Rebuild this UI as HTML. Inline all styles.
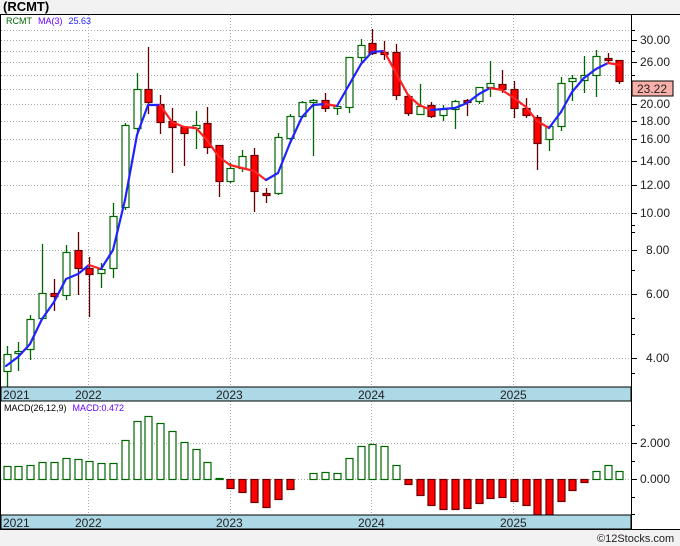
<!DOCTYPE html>
<html><head><meta charset="utf-8">
<style>
body{margin:0;width:680px;height:546px;overflow:hidden;background:#f2f2f2;font-family:"Liberation Sans",sans-serif}
svg{display:block}
</style></head><body>
<svg id="s" width="680" height="546" xmlns="http://www.w3.org/2000/svg" font-family="Liberation Sans, DejaVu Sans, sans-serif">
<rect x="0" y="0" width="680" height="546" fill="#f2f2f2"/>
<text x="3" y="11" font-size="13" font-weight="bold" fill="#000">(RCMT)</text>
<rect x="1" y="14" width="630" height="373" fill="#fff"/>
<rect x="631" y="14" width="49" height="387" fill="#fff"/>
<rect x="1" y="401" width="630" height="114" fill="#fff"/>
<rect x="631" y="401" width="49" height="129" fill="#fff"/>
<g id="grid" stroke="#aaa" stroke-dasharray="1,2" stroke-width="1"></g>
<g id="c"></g>
<rect x="1" y="387" width="630" height="14" fill="#add8e6" stroke="#000" stroke-width="1"/>
<rect x="1" y="515" width="630" height="14" fill="#add8e6" stroke="#000" stroke-width="1"/>
<g font-size="12" fill="#222">
<text x="3" y="399">2021</text><text x="75" y="399">2022</text><text x="216" y="399">2023</text><text x="358" y="399">2024</text><text x="500" y="399">2025</text>
<text x="3" y="527">2021</text><text x="75" y="527">2022</text><text x="216" y="527">2023</text><text x="358" y="527">2024</text><text x="500" y="527">2025</text>
</g>
<line x1="0.5" y1="14" x2="0.5" y2="530" stroke="#000"/>
<line x1="0" y1="14.5" x2="680" y2="14.5" stroke="#000"/>
<line x1="631.5" y1="14" x2="631.5" y2="530" stroke="#000"/>
<line x1="0" y1="529.5" x2="680" y2="529.5" stroke="#000"/>
<g id="ax" font-size="12" fill="#222"></g>
<rect x="632" y="81" width="41" height="15" fill="#f8b0a8" stroke="#000"/>
<text x="637" y="93" font-size="12" fill="#222">23.22</text>
<text x="6" y="24" font-size="9"><tspan fill="#060">RCMT</tspan><tspan dx="6" fill="#60f">MA(3)</tspan><tspan dx="6" fill="#22f">25.63</tspan></text>
<text x="4" y="411" font-size="9"><tspan fill="#000">MACD(26,12,9)</tspan><tspan dx="6" fill="#60f">MACD:0.472</tspan></text>
<text x="597" y="542" font-size="11" fill="#222">©12Stocks.com</text>
</svg>
<script>
var ns="http://www.w3.org/2000/svg";
function el(p,t,a){var e=document.createElementNS(ns,t);for(var k in a)e.setAttribute(k,a[k]);p.appendChild(e);return e;}
var g=document.getElementById('grid');
[30,40,51,62,75,89,104,121,139,161,185,213,250,294,358,443,479].forEach(function(y){el(g,'line',{x1:1,x2:631,y1:y+.5,y2:y+.5});});
[88,230,371,513].forEach(function(x){el(g,'line',{x1:x+.5,x2:x+.5,y1:15,y2:387});el(g,'line',{x1:x+.5,x2:x+.5,y1:401,y2:515});});
var ax=document.getElementById('ax');
[[40,'30.00'],[62,'26.00'],[104,'20.00'],[121,'18.00'],[139,'16.00'],[161,'14.00'],[185,'12.00'],[213,'10.00'],[250,'8.00'],[294,'6.00'],[358,'4.00']].forEach(function(a){
el(ax,'line',{x1:631,x2:637,y1:a[0]+.5,y2:a[0]+.5,stroke:'#000'});var t=el(ax,'text',{x:a[1].length>4?640:646,y:a[0]+4});t.textContent=a[1];});
[30,51,75,89,225,232,270,318,334,373].forEach(function(y){el(ax,'line',{x1:631,x2:635,y1:y+.5,y2:y+.5,stroke:'#000'});});
[[443,'2.000'],[479,'0.000']].forEach(function(a){el(ax,'line',{x1:631,x2:637,y1:a[0]+.5,y2:a[0]+.5,stroke:'#000'});var t=el(ax,'text',{x:640,y:a[0]+4});t.textContent=a[1];});
[425,461,497,514].forEach(function(y){el(ax,'line',{x1:631,x2:635,y1:y+.5,y2:y+.5,stroke:'#000'});});
var C=[[7,354,371,346,387,1],[18,351,353,342,371,1],[30,319,349,315,360,1],[42,293,318,244,318,1],[54,293,296,279,311,0],[66,252,295,245,300,1],[78,250,268,232,295,0],[89,268,274,257,317,0],[101,269,273,263,288,1],[113,216,268,203,278,1],[125,125,207,123,210,1],[137,89,128,73,134,1],[148,89,102,47,114,0],[160,104,122,95,134,0],[172,121,127,108,173,0],[184,127,133,127,166,0],[196,125,128,111,149,1],[207,123,147,107,154,0],[219,145,181,145,197,0],[230,168,181,163,183,1],[242,156,168,150,172,1],[254,155,191,148,212,0],[266,193,195,188,203,0],[278,137,193,133,195,1],[290,116,138,114,140,1],[302,102,116,101,118,1],[313,100,101,99,156,1],[325,100,108,93,112,0],[337,106,108,104,115,1],[349,57,107,57,113,1],[361,45,57,39,63,1],[372,43,53,29,55,0],[384,52,54,41,60,0],[396,52,95,44,100,0],[408,96,113,94,116,0],[420,106,114,84,114,1],[431,105,116,102,118,0],[443,109,115,105,121,1],[455,101,109,100,129,1],[467,100,102,99,116,0],[479,87,101,87,104,1],[490,83,87,61,97,1],[502,84,89,70,93,0],[514,89,108,81,118,0],[526,108,115,98,118,0],[537,117,143,115,170,0],[549,126,139,127,151,1],[561,83,126,77,131,1],[572,78,81,75,101,1],[584,75,80,56,93,1],[596,56,75,50,97,1],[608,58,60,53,62,0],[619,60,81,60,84,0]];
var M=[466,466,465,462,462,458,459,461,463,463,440,421,416,423,431,442,449,462,478,488,492,502,507,499,489,479,473,472,473,458,446,444,446,465,484,495,505,509,509,508,503,498,497,501,505,515,515,501,490,482,471,465,471];
var c=document.getElementById('c');
C.forEach(function(d,i){var col=d[5]?'#060':'#600';
el(c,'line',{x1:d[0]+.5,x2:d[0]+.5,y1:d[3],y2:d[4],stroke:col,'stroke-width':1.3});
var h=Math.max(d[2]-d[1],2);
el(c,'rect',{x:d[0]-3,y:d[1]+.5,width:7,height:h,fill:d[5]?'#fff':'#f00',stroke:d[5]?'#060':'#600','stroke-width':1.2});
var m=M[i];if(Math.abs(m-479)>=1){var up=m<479;el(c,'rect',{x:d[0]-3,y:Math.min(m,479)+.5,width:7,height:Math.abs(m-479),fill:up?'#fff':'#f00',stroke:up?'#060':'#600','stroke-width':1.2});}
});
var P=[[6,366],[18,357],[30,344],[42,319],[54,302],[66,279],[78,274],[89,265],[101,269],[113,250],[125,200],[137,135],[148,105],[160,105],[172,122],[184,127],[196,128],[207,140],[219,157],[230,165],[242,168],[254,171],[266,180],[278,173],[290,143],[302,117],[313,105],[325,104],[337,106],[349,85],[361,64],[372,52],[384,51],[396,73],[408,95],[419,105],[431,110],[443,109],[455,108],[467,103],[479,94],[490,88],[502,90],[514,98],[526,107],[537,121],[549,128],[561,112],[572,92],[584,78],[596,69],[608,63],[620,65]];
for(var i=1;i<P.length;i++){el(c,'line',{x1:P[i-1][0],y1:P[i-1][1],x2:P[i][0],y2:P[i][1],stroke:P[i][1]<=P[i-1][1]?'#22f':'#f22','stroke-width':2.2,'stroke-linecap':'round'});}
</script>
</body></html>
